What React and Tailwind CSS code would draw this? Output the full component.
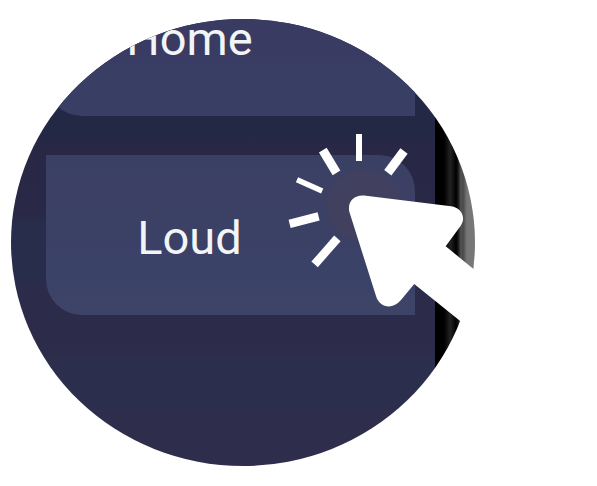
function MenuButton({ children, className }) {
  return (
    <button
      type="button"
      className={`h-40 w-full shrink-0 rounded-tr-[36px] rounded-bl-[36px] pt-1.5 pr-[82px] text-center text-[47px] text-gray-100 ${className}`}
    >
      {children}
    </button>
  );
}

function ClickCursor() {
  return (
    <svg
      aria-hidden="true"
      viewBox="280 125 200 200"
      className="absolute top-[106px] left-[269px] h-[200px] w-[200px] overflow-visible"
    >
      <circle cx="363" cy="206" r="36" fill="#41405e" />
      <g stroke="white">
        <path d="M359 134V161" strokeWidth="6" />
        <path d="M322.8 150.2L336.5 172.8" strokeWidth="9" />
        <path d="M404 151L387.8 172.8" strokeWidth="9" />
        <path d="M297 179.8L322.2 191" strokeWidth="5.5" />
        <path d="M289.6 223.8L318.6 216.4" strokeWidth="8.5" />
        <path d="M314.6 264.4L337.4 238.4" strokeWidth="8.5" />
      </g>
      <path
        d="M349.4 212C347 202 354 194.800 364 195.600L451 206.200C461.500 207.500 466.500 218 460.500 226L445.700 246.300L490 282.500V345L414.200 284L401 300C393 310 379.500 308 376 296Z"
        fill="white"
      />
    </svg>
  );
}

export default function App() {
  return (
    <main className="min-h-screen bg-white pt-[19px] pl-[11px] font-[Roboto,sans-serif]">
      <div className="relative w-full max-w-[464px]">
        <div className="flex h-[447px] overflow-hidden rounded-[50%]">
          <section className="flex flex-1 flex-col gap-[39px] bg-[linear-gradient(to_bottom,#232845_0px,#232845_115px,#292746_125px,#292847_195px,#272d4a_205px,#272d4a_262px,#2d2b4a_272px,#2d2b4a_330px,#2b2e4c_340px,#2c2e4d_385px,#2f2d4c_400px,#2f2d4c_447px)] pr-5 pl-[35px]">
            <MenuButton className="-mt-[63px] bg-linear-to-b from-[#393b63] from-60% to-[#393e65] to-70%">
              Home
            </MenuButton>
            <MenuButton className="bg-[linear-gradient(to_bottom,#394064_0%,#3c4064_20%,#3b4066_55%,#3b4267_65%,#3b4267_80%,#3e4368_90%)]">
              Loud
            </MenuButton>
          </section>
          <div className="w-10 bg-[linear-gradient(to_right,#000_0px,#000_9px,#222_15px,#181818_17px,#000_21px,#151515_23px,#555_26px,#484848_28px,#777_32px,#777_40px)]" />
        </div>
        <ClickCursor />
      </div>
    </main>
  );
}
